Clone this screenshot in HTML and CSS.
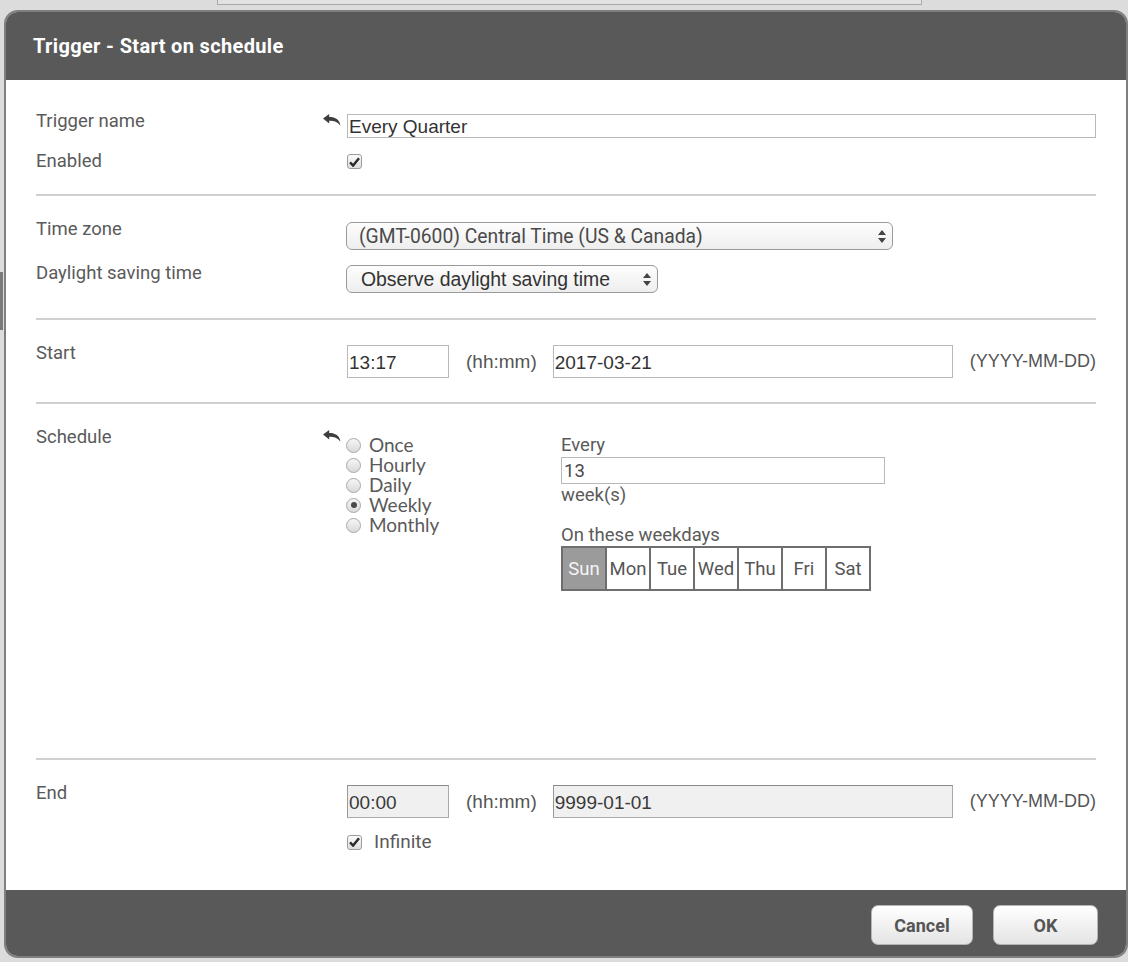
FILE: index.html
```html
<!DOCTYPE html>
<html lang="en">
<head>
<meta charset="utf-8">
<title>Trigger - Start on schedule</title>
<link rel="stylesheet" href="styles.css">
</head>
<body>
<div class="bg-topbox"></div>
<div class="bg-strip"></div>

<div class="dialog">
  <header class="dlg-header">
    <h1 class="dlg-title">Trigger - Start on schedule</h1>
  </header>

  <div class="dlg-body">
    <section class="sec sec-name">
      <div class="row">
        <div class="label">Trigger name</div>
        <div class="undo"><svg width="18" height="12" viewBox="0 0 18 12"><path d="M0 4.6 L6.2 0 V3 C12.5 3 16.6 5.6 17.4 11.6 C14.6 8 11.2 6.7 6.2 6.7 V9.4 Z" fill="#3d3d3d"/></svg></div>
        <div class="field field-name">Every Quarter</div>
      </div>
      <div class="row row-gap14">
        <div class="label">Enabled</div>
        <div></div>
        <span class="check check-top"><svg width="11" height="10" viewBox="0 0 11 10"><path d="M1 5.4 L4.1 8.6 L10 1.2" fill="none" stroke="#2b2b2b" stroke-width="2.4"/></svg></span>
      </div>
    </section>

    <section class="sec sec-tz">
      <div class="row">
        <div class="label">Time zone</div>
        <div></div>
        <div class="select select-tz"><span class="select-text tz-text">(GMT-0600) Central Time (US &amp; Canada)</span><svg class="updown" width="8" height="13" viewBox="0 0 8 13"><path d="M4 0 L8 5 H0 Z M4 13 L8 8 H0 Z" fill="#444"/></svg></div>
      </div>
      <div class="row row-gap14">
        <div class="label">Daylight saving time</div>
        <div></div>
        <div class="select select-dst"><span class="select-text dst-text">Observe daylight saving time</span><svg class="updown" width="8" height="13" viewBox="0 0 8 13"><path d="M4 0 L8 5 H0 Z M4 13 L8 8 H0 Z" fill="#444"/></svg></div>
      </div>
    </section>

    <section class="sec sec-start">
      <div class="row">
        <div class="label">Start</div>
        <div></div>
        <div class="dt-row">
          <div class="field field-time">13:17</div>
          <span class="unit unit-time">(hh:mm)</span>
          <div class="field field-date">2017-03-21</div>
          <span class="unit unit-date">(YYYY-MM-DD)</span>
        </div>
      </div>
    </section>

    <section class="sec sec-schedule">
      <div class="row">
        <div class="label">Schedule</div>
        <div class="undo"><svg width="18" height="12" viewBox="0 0 18 12"><path d="M0 4.6 L6.2 0 V3 C12.5 3 16.6 5.6 17.4 11.6 C14.6 8 11.2 6.7 6.2 6.7 V9.4 Z" fill="#3d3d3d"/></svg></div>
        <div class="sched">
          <ul class="radios">
            <li class="radio-item"><span class="radio"></span><span class="radio-text">Once</span></li>
            <li class="radio-item"><span class="radio"></span><span class="radio-text">Hourly</span></li>
            <li class="radio-item"><span class="radio"></span><span class="radio-text">Daily</span></li>
            <li class="radio-item"><span class="radio radio-on"></span><span class="radio-text">Weekly</span></li>
            <li class="radio-item"><span class="radio"></span><span class="radio-text">Monthly</span></li>
          </ul>
          <div class="sched-detail">
            <div class="sd-line sd-every">Every</div>
            <div class="field field-every">13</div>
            <div class="sd-line sd-weeks">week(s)</div>
            <div class="sd-line sd-on">On these weekdays</div>
            <div class="days">
              <span class="day day-on">Sun</span>
              <span class="day">Mon</span>
              <span class="day">Tue</span>
              <span class="day">Wed</span>
              <span class="day">Thu</span>
              <span class="day">Fri</span>
              <span class="day">Sat</span>
            </div>
          </div>
        </div>
      </div>
    </section>

    <section class="sec sec-end">
      <div class="row">
        <div class="label">End</div>
        <div></div>
        <div class="end-col">
          <div class="dt-row">
            <div class="field field-time field-disabled">00:00</div>
            <span class="unit unit-time">(hh:mm)</span>
            <div class="field field-date field-disabled">9999-01-01</div>
            <span class="unit unit-date">(YYYY-MM-DD)</span>
          </div>
          <div class="infinite">
            <span class="check"><svg width="11" height="10" viewBox="0 0 11 10"><path d="M1 5.4 L4.1 8.6 L10 1.2" fill="none" stroke="#2b2b2b" stroke-width="2.4"/></svg></span>
            <span class="infinite-text">Infinite</span>
          </div>
        </div>
      </div>
    </section>
  </div>

  <footer class="dlg-footer">
    <button class="btn" type="button">Cancel</button>
    <button class="btn btn-ok" type="button">OK</button>
  </footer>
</div>
</body>
</html>
```

FILE: styles.css
```css
* { box-sizing: border-box; }

html, body {
  margin: 0;
  height: 100%;
}

body {
  position: relative;
  overflow: hidden;
  background: #dcdcdc;
  font-family: Roboto, "Noto Sans", sans-serif;
  color: #5a5a5a;
}

/* faint background application behind the modal */
.bg-topbox {
  position: absolute;
  left: 217px;
  top: -12px;
  width: 705px;
  height: 17px;
  border: 1px solid #a9a9a9;
  background: #e2e2e2;
}

.bg-strip {
  position: absolute;
  left: 0;
  top: 272px;
  width: 3px;
  height: 58px;
  background: #7a7a7a;
}

/* dialog */
.dialog {
  position: absolute;
  left: 4px;
  top: 10px;
  width: 1124px;
  height: 948px;
  border: 2px solid #7f7f7f;
  border-radius: 14px;
  overflow: hidden;
  display: flex;
  flex-direction: column;
  background: #fff;
}

.dlg-header {
  flex: none;
  height: 68px;
  background: #595959;
  display: flex;
  align-items: center;
  padding-left: 27px;
}

.dlg-title {
  margin: 0;
  font-size: 20px;
  font-weight: 700;
  color: #fff;
  letter-spacing: 0.35px;
}

.dlg-body {
  flex: 1;
  display: flex;
  flex-direction: column;
  padding: 0 30px;
}

.sec {
  border-bottom: 2px solid #d0d0d0;
}

.sec-name { padding: 32px 0 24px; }
.sec-tz { padding: 24px 0 25px; }
.sec-start { padding: 24px 0 24px; }
.sec-schedule { padding-top: 24px; height: 356px; }
.sec-end { padding-top: 24px; border-bottom: 0; flex: 1; }

.row {
  display: grid;
  grid-template-columns: 287px 24px 1fr;
  align-items: start;
}

.row-gap14 { margin-top: 14px; }

.label {
  font-size: 18.5px;
  line-height: 18px;
  color: #5a5a5a;
}

.undo {
  margin-top: 2px;
  height: 12px;
  display: flex;
}

/* inputs */
.field {
  display: flex;
  align-items: center;
  border: 1px solid #b9b9b9;
  background: #fff;
  font-family: "Liberation Sans", Arial, sans-serif;
  font-size: 19px;
  color: #333;
  padding: 0 1px;
  white-space: nowrap;
}

.field-name {
  margin-top: 2px;
  height: 24px;
  width: 749px;
  padding-top: 2px;
}

.field-disabled {
  background: #f0f0f0;
  border-color: #aaa;
  border-top-color: #8a8a8a;
  border-left-color: #999;
  color: #3a3a3a;
}

/* checkbox */
.check {
  width: 15px;
  height: 15px;
  border: 1px solid #9d9d9d;
  border-radius: 3px;
  background: linear-gradient(#fbfbfb, #dedede);
  display: flex;
  align-items: center;
  justify-content: center;
}

.check-top { margin-top: 2px; }

/* selects */
.select {
  display: flex;
  align-items: center;
  height: 28px;
  border: 1px solid #9a9a9a;
  border-radius: 6px;
  background: linear-gradient(#fdfdfd, #eeeeee);
  padding-right: 6px;
  margin-left: -1px;
}

.select-tz { margin-top: 2px; width: 547px; padding-left: 12px; }
.select-dst { margin-top: 1px; width: 312px; padding-left: 14px; }

.select-text { flex: 1; white-space: nowrap; }

.tz-text {
  font-family: Roboto, "Noto Sans", sans-serif;
  font-size: 19.3px;
  color: #4a4a4a;
}

.dst-text {
  font-family: "Liberation Sans", Arial, sans-serif;
  font-size: 19.4px;
  color: #333;
}

.updown { flex: none; }

/* date / time rows */
.dt-row {
  display: flex;
  align-items: center;
  margin-top: 1px;
  width: 749px;
}

.field-time { width: 102px; height: 33px; padding-top: 3px; }
.field-date { width: 400px; height: 33px; padding-top: 3px; }

.unit {
  font-family: "Liberation Sans", Arial, sans-serif;
  font-size: 19px;
  color: #555;
  white-space: nowrap;
}

.unit-time { margin: 0 16px 0 17px; }
.unit-date { margin-left: auto; font-size: 18px; }

/* schedule */
.sched {
  display: flex;
}

.radios {
  list-style: none;
  margin: 7px 0 0 -1px;
  padding: 0;
  width: 215px;
  font-family: Lato, sans-serif;
  font-size: 19px;
  line-height: 20px;
  color: #5a5a5a;
}

.radio-item {
  display: flex;
  align-items: center;
  gap: 8px;
  height: 20px;
}

.radio-text {
  line-height: 20px;
  height: 20px;
}

.radio {
  width: 15px;
  height: 15px;
  border-radius: 50%;
  border: 1px solid #a8a8a8;
  background: linear-gradient(#f6f6f6, #d9d9d9);
  display: flex;
  align-items: center;
  justify-content: center;
}

.radio-on::after {
  content: "";
  width: 6px;
  height: 6px;
  border-radius: 50%;
  background: #4a4a4a;
}

.sched-detail {
  width: 324px;
}

.sd-line {
  font-size: 18.5px;
  line-height: 20px;
  color: #5a5a5a;
}

.sd-every { margin-top: 7px; }

.field-every {
  margin-top: 2px;
  height: 27px;
  font-family: Roboto, "Noto Sans", sans-serif;
  font-size: 18.5px;
  color: #4a4a4a;
  padding-left: 2px;
}

.sd-weeks { margin-top: 1px; }
.sd-on { margin-top: 20px; }

.days {
  margin-top: 1px;
  display: grid;
  grid-template-columns: repeat(7, 42px);
  gap: 2px;
  width: 310px;
  height: 45px;
  border: 2px solid #6e6e6e;
  background: #6e6e6e;
}

.day {
  background: #fff;
  display: flex;
  align-items: center;
  justify-content: center;
  font-size: 18.5px;
  color: #555;
}

.day-on {
  background: #9b9b9b;
  color: #f4f4f4;
}

/* end */
.end-col {
  display: flex;
  flex-direction: column;
}

.infinite {
  display: flex;
  align-items: center;
  margin-top: 14px;
  gap: 12px;
}

.infinite-text {
  font-size: 19px;
  line-height: 20px;
  color: #5a5a5a;
}

/* footer */
.dlg-footer {
  flex: none;
  height: 66px;
  background: #595959;
  display: flex;
  justify-content: flex-end;
  align-items: flex-start;
  gap: 20px;
  padding: 15px 28px 0 0;
}

.btn {
  height: 40px;
  width: 102px;
  border: 1px solid #b5b5b5;
  border-radius: 7px;
  background: linear-gradient(#ffffff, #e4e4e4);
  font-family: Roboto, "Noto Sans", sans-serif;
  font-size: 18px;
  font-weight: 700;
  color: #555;
  padding: 0;
}

.btn-ok { width: 105px; }
```
